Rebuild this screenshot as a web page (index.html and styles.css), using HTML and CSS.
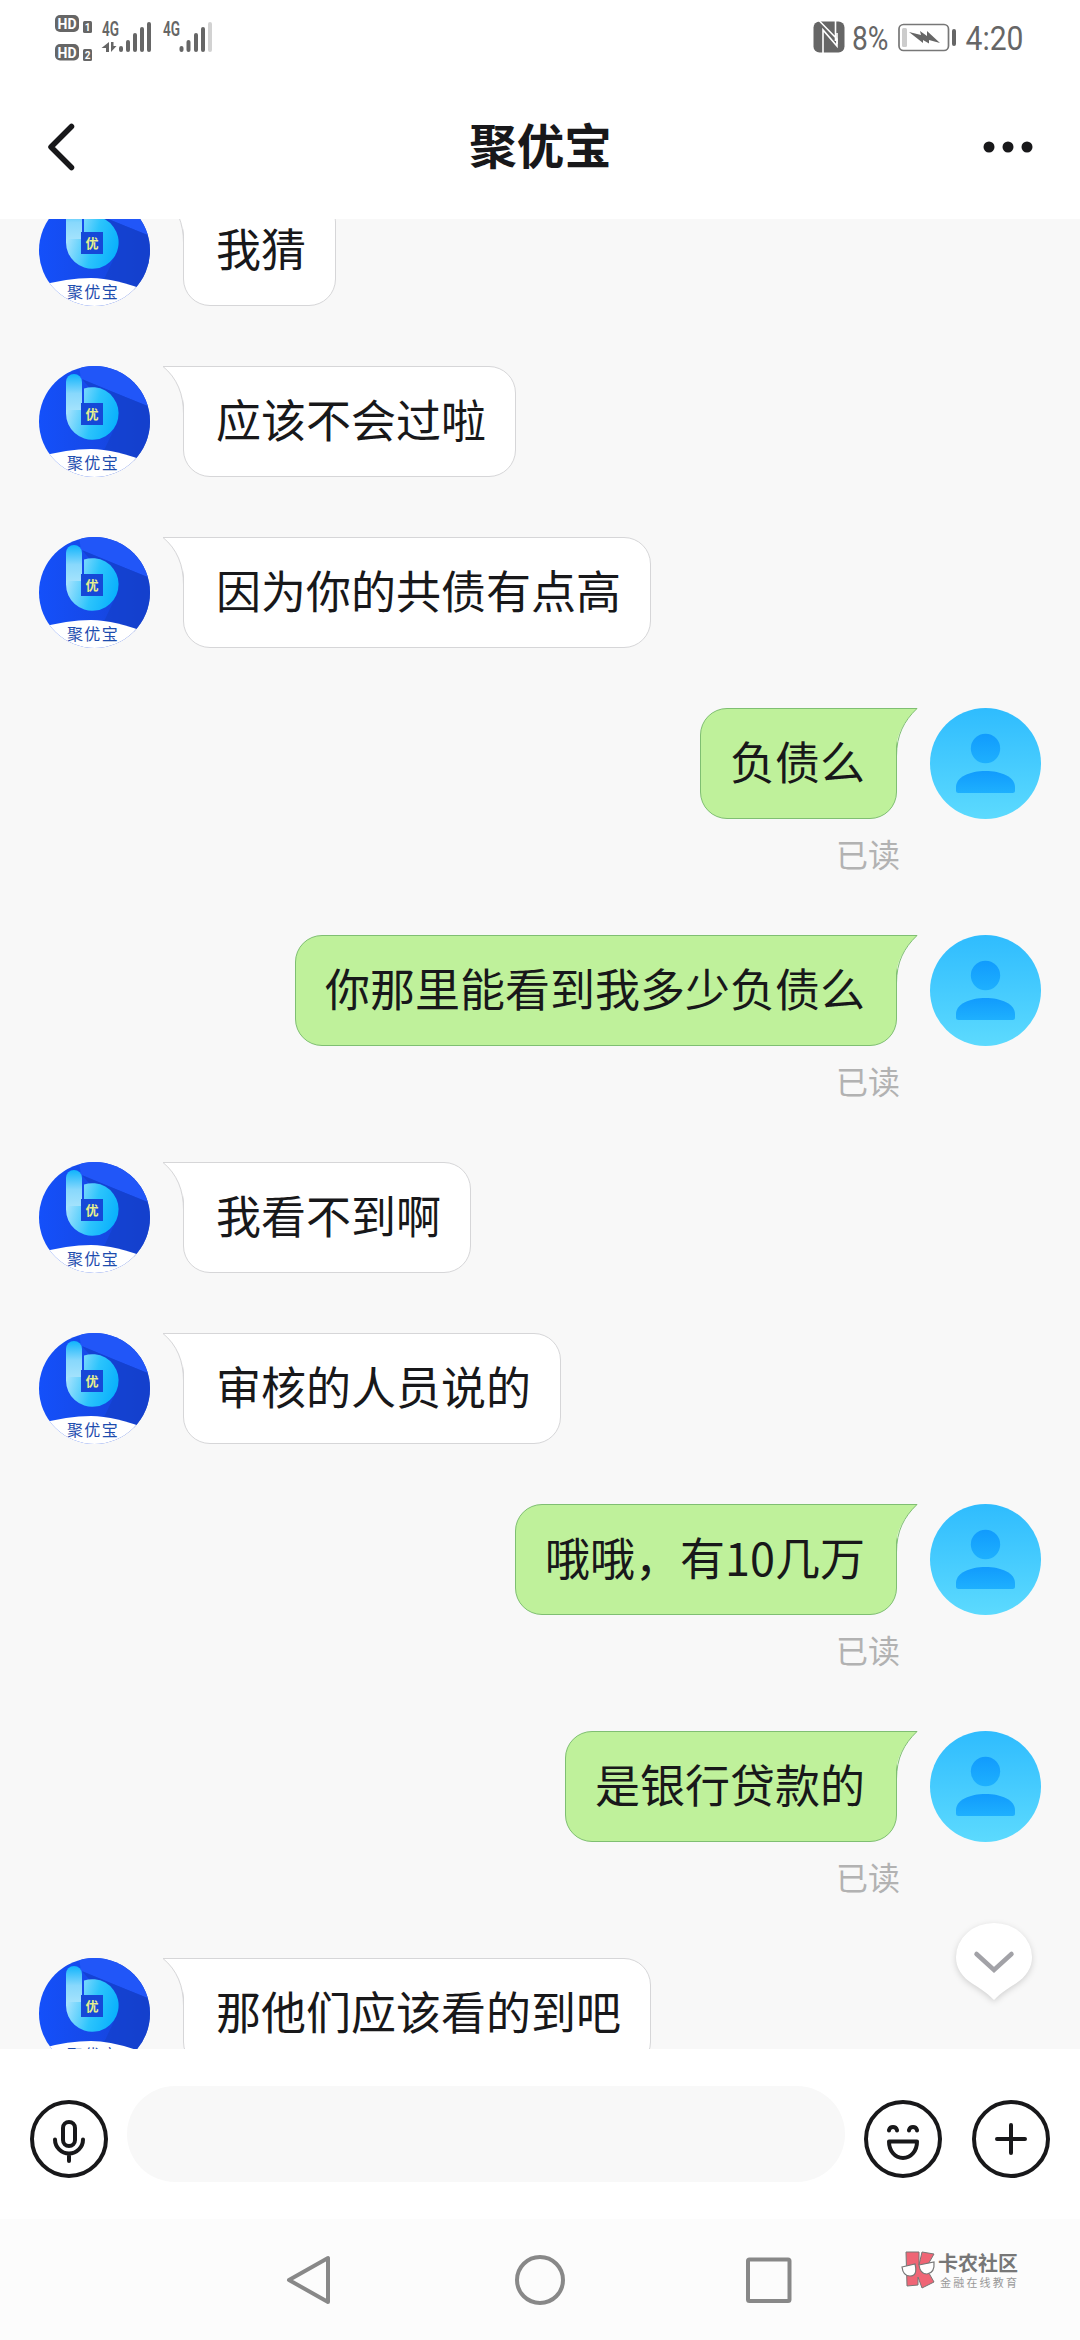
FILE: index.html
```html
<!DOCTYPE html>
<html lang="zh-CN">
<head>
<meta charset="utf-8">
<title>聚优宝</title>
<link rel="stylesheet" href="styles.css">
</head>
<body>
<svg class="defs" width="0" height="0" aria-hidden="true">
  <defs>
    <linearGradient id="blue" x1="0" y1="0" x2="1" y2="0"><stop offset="0" stop-color="#1450fa"/><stop offset=".55" stop-color="#1648e6"/><stop offset="1" stop-color="#1440cc"/></linearGradient>
    <linearGradient id="stem" x1="0" y1="0" x2="0" y2="1"><stop offset="0" stop-color="#10b4fc"/><stop offset=".5" stop-color="#88d8fc"/><stop offset="1" stop-color="#a8e4fc"/></linearGradient>
    <linearGradient id="bowl" x1="0" y1=".3" x2="1" y2=".6"><stop offset="0" stop-color="#b4e6fd"/><stop offset=".55" stop-color="#2cc4fc"/><stop offset="1" stop-color="#08b0fc"/></linearGradient>
    <linearGradient id="sky" x1="0" y1="0" x2="0" y2="1"><stop offset="0" stop-color="#2fbcfe"/><stop offset="1" stop-color="#5cdafe"/></linearGradient>
    <linearGradient id="person" x1="0" y1="0" x2="0" y2="1"><stop offset="0" stop-color="#119bfd"/><stop offset="1" stop-color="#1eb0fe"/></linearGradient>
    <clipPath id="disc"><circle cx="55.5" cy="55.5" r="55.5"/></clipPath>
  </defs>
  <symbol id="brand" viewBox="0 0 111 111">
    <g clip-path="url(#disc)">
      <rect width="111" height="111" fill="url(#blue)"/>
      <path d="M40 0H111V41L79 28L42 13Z" fill="#2156f8"/>
      <path d="M43 13L79 28L111 41V95H60L79 55Z" fill="#1440cc" opacity=".75"/>
      <path d="M27 16a8 8 0 0 1 16 0V47H27Z" fill="url(#stem)"/>
      <path d="M27 44V47.500A26.300 26.300 0 1 0 45 22.500V37H42V44Z" fill="url(#bowl)"/>
      <rect x="42" y="37" width="22" height="22" fill="#1548d8"/>
      <path d="M0 91Q28 83 52 83Q76 83 111 97V111H0Z" fill="#fff"/>
    </g>
    <text class="brand-mark" x="53" y="52.500" text-anchor="middle">优</text>
    <text class="brand-name" x="54" y="103" text-anchor="middle">聚优宝</text>
  </symbol>
  <symbol id="user" viewBox="0 0 111 111">
    <circle cx="55.500" cy="55.500" r="55.500" fill="url(#sky)"/>
    <circle cx="55.500" cy="40.500" r="14.700" fill="url(#person)"/>
    <path d="M26 79C26 69 40 63 55.500 63S85 69 85 79V82.500Q85 85 82.500 85H28.500Q26 85 26 82.500Z" fill="url(#person)"/>
  </symbol>
  <symbol id="tail-left" viewBox="0 0 24 48">
    <path d="M1 .5H24V47H22.500C22.500 28 15 12 1 .5Z" fill="#fff"/>
    <path d="M24 .5H1C15 12 21.500 28 21.500 48" fill="none" stroke="#d6d6d8"/>
  </symbol>
  <symbol id="tail-right" viewBox="0 0 24 48">
    <path d="M23 .5H0V47H1.500C1.500 28 9 14 23 .5Z" fill="#bff19b"/>
    <path d="M0 .5H23C10 13 2.500 27 2.500 48" fill="none" stroke="#7fbf72"/>
  </symbol>
</svg>

<div class="screen">
  <header class="status">
    <svg class="status-left" width="200" height="72" viewBox="40 0 200 72">
      <g fill="#666">
        <rect x="55" y="15" width="24" height="17" rx="5"/><rect x="55" y="44" width="24" height="16.500" rx="5"/>
        <rect x="83" y="21" width="9" height="12" rx="1.500"/><rect x="83" y="49" width="9" height="12" rx="1.500"/>
        <path d="M109 42V52H106V48H101.500ZM111 42V52L116.500 46H113.500V42Z"/>
        <rect x="119" y="46" width="4" height="6" rx="2"/><rect x="126" y="40" width="4" height="12" rx="2"/><rect x="133" y="33" width="4" height="19" rx="2"/><rect x="140" y="27" width="4" height="25" rx="2"/><rect x="147" y="22" width="4" height="30" rx="2"/>
        <rect x="179.500" y="46" width="4" height="6" rx="2"/><rect x="186.500" y="40" width="4" height="12" rx="2"/><rect x="194" y="33" width="4" height="19" rx="2"/><rect x="201" y="27" width="4" height="25" rx="2"/>
        <rect x="208" y="22" width="4" height="30" rx="2" fill="#d2d2d2"/>
      </g>
      <g class="status-hd"><text x="57.500" y="29" textLength="19" lengthAdjust="spacingAndGlyphs">HD</text><text x="57.500" y="57.500" textLength="19" lengthAdjust="spacingAndGlyphs">HD</text></g>
      <g class="status-sim"><text x="84.800" y="31">1</text><text x="84.800" y="59">2</text></g>
      <g class="status-net"><text x="102" y="35.500" textLength="17" lengthAdjust="spacingAndGlyphs">4G</text><text x="163" y="35.500" textLength="17" lengthAdjust="spacingAndGlyphs">4G</text></g>
    </svg>
    <svg class="status-right" width="260" height="72" viewBox="790 0 260 72">
      <rect x="813.500" y="21.500" width="31" height="31" rx="6" fill="#666"/>
      <path d="M823 53V30L837 46V33" fill="none" stroke="#fff" stroke-width="1.600"/>
      <path d="M819 20.500L837 39V44M835.500 20V41" fill="none" stroke="#fff" stroke-width="1.600"/>
      <rect x="899" y="24.500" width="49.500" height="26" rx="4.500" fill="none" stroke="#777" stroke-width="1.700"/>
      <rect x="902" y="28" width="5" height="19" rx="1.500" fill="#ccc"/>
      <rect x="952" y="29" width="4" height="17" rx="2" fill="#666"/>
      <path d="M909 32L921 35L920 31L927 36L927 31L940 43L929 40V43.500L923 40V43Z" fill="#666"/>
      <g class="status-num"><text x="852" y="50" textLength="36.500" lengthAdjust="spacingAndGlyphs">8%</text><text x="965.500" y="50" textLength="58" lengthAdjust="spacingAndGlyphs">4:20</text></g>
    </svg>
  </header>

  <nav class="titlebar">
    <svg width="50" height="60" viewBox="40 117 50 60"><path d="M71.500 126.500L51 147L71.500 167.500" fill="none" stroke="#18181a" stroke-width="5.500" stroke-linecap="round" stroke-linejoin="round"/></svg>
    <h1>聚优宝</h1>
    <svg width="50" height="60" viewBox="983 117 50 60"><g fill="#18181a"><circle cx="989" cy="147" r="5.500"/><circle cx="1008" cy="147" r="5.500"/><circle cx="1027" cy="147" r="5.500"/></g></svg>
  </nav>

  <main class="chat">
    <div class="messages">
      <div class="row"><svg class="avatar"><use href="#brand"/></svg><p class="bubble in"><svg class="tail"><use href="#tail-left"/></svg>我猜</p></div>
      <div class="row"><svg class="avatar"><use href="#brand"/></svg><p class="bubble in"><svg class="tail"><use href="#tail-left"/></svg>应该不会过啦</p></div>
      <div class="row"><svg class="avatar"><use href="#brand"/></svg><p class="bubble in"><svg class="tail"><use href="#tail-left"/></svg>因为你的共债有点高</p></div>
      <div class="row mine"><svg class="avatar"><use href="#user"/></svg><div class="stack"><p class="bubble out"><svg class="tail"><use href="#tail-right"/></svg>负债么</p><span class="read">已读</span></div></div>
      <div class="row mine"><svg class="avatar"><use href="#user"/></svg><div class="stack"><p class="bubble out"><svg class="tail"><use href="#tail-right"/></svg>你那里能看到我多少负债么</p><span class="read">已读</span></div></div>
      <div class="row"><svg class="avatar"><use href="#brand"/></svg><p class="bubble in"><svg class="tail"><use href="#tail-left"/></svg>我看不到啊</p></div>
      <div class="row"><svg class="avatar"><use href="#brand"/></svg><p class="bubble in"><svg class="tail"><use href="#tail-left"/></svg>审核的人员说的</p></div>
      <div class="row mine"><svg class="avatar"><use href="#user"/></svg><div class="stack"><p class="bubble out"><svg class="tail"><use href="#tail-right"/></svg>哦哦，有10几万</p><span class="read">已读</span></div></div>
      <div class="row mine"><svg class="avatar"><use href="#user"/></svg><div class="stack"><p class="bubble out"><svg class="tail"><use href="#tail-right"/></svg>是银行贷款的</p><span class="read">已读</span></div></div>
      <div class="row"><svg class="avatar"><use href="#brand"/></svg><p class="bubble in"><svg class="tail"><use href="#tail-left"/></svg>那他们应该看的到吧</p></div>
    </div>
    <svg class="to-bottom" width="96" height="96" viewBox="946 1914 96 96">
      <path d="M994 2000C986 1992 981 1989 973 1984C962 1977 956 1968 956 1957A38 34 0 0 1 1032 1957C1032 1968 1026 1977 1015 1984C1007 1989 1002 1992 994 2000Z" fill="#fff"/>
      <path d="M976.500 1954L994 1970L1011.500 1954" fill="none" stroke="#a2a2a7" stroke-width="4.500" stroke-linecap="round"/>
    </svg>
  </main>

  <section class="composer">
    <svg class="tool" viewBox="0 0 78 78"><g class="line"><circle cx="39" cy="39" r="37"/><rect x="33" y="22" width="12" height="24" rx="6"/><path d="M25 39.500A14 14 0 0 0 53 39.500M39 54V61"/></g></svg>
    <div class="field"></div>
    <svg class="tool" viewBox="0 0 78 78"><g class="line"><circle cx="39" cy="39" r="37"/><path d="M25 30.500V30a4.200 4.200 0 0 1 8 0V30.500M45 30.500V30a4.200 4.200 0 0 1 8 0V30.500M25 41.500H53C53 51 47 58 39 58S25 51 25 41.500Z"/></g></svg>
    <svg class="tool plus" viewBox="0 0 78 78"><g class="line"><circle cx="39" cy="39" r="37"/><path d="M25 39H53M39 25V53"/></g></svg>
  </section>

  <footer class="system">
    <svg width="52" height="52" viewBox="0 0 52 52"><path d="M43 4V48L4 26Z"/></svg>
    <svg width="52" height="52" viewBox="0 0 52 52"><circle cx="26" cy="26" r="23"/></svg>
    <svg width="52" height="52" viewBox="0 0 52 52"><rect x="5" y="5.500" width="41.500" height="41.500" rx="1.500"/></svg>
    <div class="watermark">
      <svg width="36" height="38" viewBox="0 0 36 38">
        <path d="M5 1H18V14L21 1L33 3L25 17L33 31L21 37L17 26V34L6 35Z" fill="#ef6575" stroke="#777"/>
        <path d="M1 16L14 13Q17 25 9 25Q2 25 1 16ZM18 14L33 11Q34 22 26 23Q19 23 18 14Z" fill="#fff" stroke="#777" stroke-width="1.200"/>
      </svg>
      <div class="wm-text"><strong>卡农社区</strong><span>金融在线教育</span></div>
    </div>
  </footer>
</div>
</body>
</html>
```
FILE: styles.css
```css
* { box-sizing: border-box; }

body {
  margin: 0;
  background: #fff;
  color: #18181a;
  font-family: "Noto Sans CJK SC", sans-serif;
}

svg { display: block; flex: none; }
.defs { position: absolute; }

.screen {
  display: flex;
  flex-direction: column;
  width: 1080px;
  height: 2340px;
  overflow: hidden;
}

.status {
  display: flex;
  justify-content: space-between;
  height: 72px;
  padding: 0 30px 0 40px;
}
.status text { font-family: Roboto, sans-serif; }
.status-hd { font-size: 15px; font-weight: 700; fill: #fff; }
.status-sim { font-size: 10px; font-weight: 700; fill: #fff; }
.status-net { font-size: 19.500px; font-weight: 600; fill: #666; }
.status-num { font-size: 34px; fill: #666; }

.titlebar {
  display: flex;
  align-items: center;
  justify-content: space-between;
  height: 147px;
  padding: 3px 47px 0 40px;
}
.titlebar h1 {
  margin: 0 0 6px 8px;
  font-size: 47.500px;
  line-height: 72px;
  font-weight: 700;
}

.chat {
  position: relative;
  height: 1830px;
  overflow: hidden;
  background: #f8f8f8;
}
.messages {
  display: flex;
  flex-direction: column;
  gap: 60px;
  margin-top: -24px;
  padding: 0 39px;
}
.row { display: flex; gap: 33px; flex: none; }
.row.mine { flex-direction: row-reverse; }
.avatar { width: 111px; height: 111px; }
.brand-mark { font-size: 13px; font-weight: 700; fill: #e6f08c; }
.brand-name { font-size: 16px; font-weight: 400; letter-spacing: 1.300px; fill: #1d4cae; }

.stack { display: flex; flex-direction: column; align-items: flex-end; }
.bubble {
  position: relative;
  height: 111px;
  margin: 0;
  border: 1px solid;
  font-size: 45px;
  line-height: 103px;
  white-space: nowrap;
}
.bubble.in {
  padding: 0 29px 0 32px;
  background: #fff;
  border-color: #d6d6d8;
  border-radius: 0 27px 27px 27px;
}
.bubble.out {
  padding: 0 31px 0 29px;
  background: #bff19b;
  border-color: #7fbf72;
  border-radius: 27px 0 27px 27px;
}
.tail { position: absolute; top: -1px; width: 24px; height: 48px; }
.in .tail { left: -22px; }
.out .tail { right: -22px; }
.read {
  margin-top: 14px;
  height: 42px;
  margin-right: -3px;
  font-size: 32px;
  line-height: 40px;
  color: #b2b2b2;
}

.to-bottom {
  position: absolute;
  right: 38px;
  bottom: 39px;
  filter: drop-shadow(0 2px 3px rgba(0, 0, 0, .16));
}

.composer {
  display: flex;
  align-items: flex-start;
  gap: 19px;
  height: 170px;
  padding: 37px 30px 0;
  background: #fff;
}
.tool { width: 78px; height: 78px; margin-top: 14px; }
.tool.plus { margin-left: 11px; }
.line { fill: none; stroke: #18181a; stroke-width: 4; stroke-linecap: round; stroke-linejoin: round; }
.field { flex: 1; height: 96px; border-radius: 48px; background: #f8f8f8; }

.system {
  display: grid;
  grid-template-columns: 52px 52px 52px 120px;
  column-gap: 177px;
  align-items: start;
  height: 121px;
  padding: 35px 0 0 285px;
  background: #fcfcfc;
}
.system > svg { fill: none; stroke: #888; stroke-width: 4; stroke-linejoin: round; }
.watermark { display: flex; gap: 1px; margin: -3px 0 0 -71px; }
.wm-text { display: flex; flex-direction: column; color: #777; white-space: nowrap; }
.wm-text strong { font-size: 20px; line-height: 24px; }
.wm-text span { margin-left: 2px; font-size: 11px; line-height: 14px; letter-spacing: 2.200px; color: #999; }
```
